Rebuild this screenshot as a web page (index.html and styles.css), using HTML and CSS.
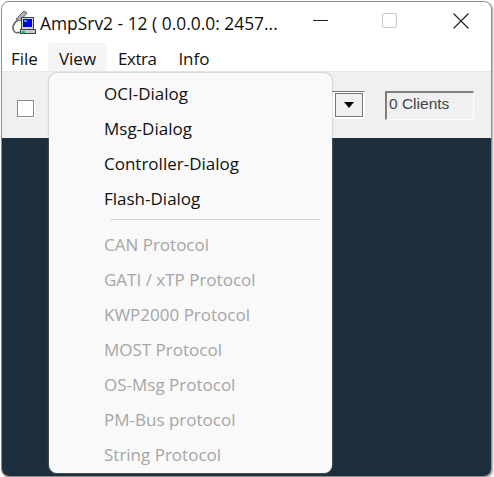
FILE: index.html
```html
<!DOCTYPE html>
<html>
<head>
  <title>AmpSrv2</title>
  <link rel="stylesheet" href="styles.css">
</head>
<body>

  <div class="window">
    <div class="titlebar">
      <svg class="app-icon" width="24" height="25" viewBox="0 0 24 25">
        <path d="M6 10 C1 13 0 18 2 21 C3 23 6 23 9 22" fill="none" stroke="#666" stroke-width="1.6"/>
        <path d="M4 9 L12 1 L15 3 L8 11 Z" fill="#b0b0b0" stroke="#666"/>
        <rect x="9.5" y="7.5" width="12" height="12" fill="#d0d0d0" stroke="#444"/>
        <rect x="11" y="9" width="9" height="8" fill="#0000e0"/>
        <rect x="12" y="10" width="3" height="2" fill="#30a0ff"/>
        <rect x="8.5" y="19.5" width="15" height="4" fill="#c8c8c8" stroke="#444"/>
        <rect x="10" y="21" width="3" height="2" fill="#00d050"/>
      </svg>
      <div class="title">AmpSrv2 - 12 ( 0.0.0.0: 2457...</div>
      <div class="win-btn"><span class="min-icon"></span></div>
      <div class="win-btn"><span class="max-icon"></span></div>
      <div class="win-btn">
        <svg width="16" height="16" viewBox="0 0 16 16"><path d="M0.5 0.5 L15.5 15.5 M15.5 0.5 L0.5 15.5" stroke="#222" stroke-width="1.2"/></svg>
      </div>
    </div>

    <div class="menubar">
      <div class="menubar-item">File</div>
      <div class="menubar-item active">View</div>
      <div class="menubar-item narrow">Extra</div>
      <div class="menubar-item">Info</div>
    </div>

    <div class="toolbar">
      <span class="checkbox"></span>
      <div class="combo"><span class="combo-btn"><span class="arrow"></span></span></div>
      <div class="status">0 Clients</div>
    </div>

    <div class="content"></div>

    <!-- View menu -->
    <div class="menu">
      <div class="menu-item">OCI-Dialog</div>
      <div class="menu-item">Msg-Dialog</div>
      <div class="menu-item">Controller-Dialog</div>
      <div class="menu-item">Flash-Dialog</div>
      <div class="separator"></div>
      <div class="menu-item disabled">CAN Protocol</div>
      <div class="menu-item disabled">GATI / xTP Protocol</div>
      <div class="menu-item disabled">KWP2000 Protocol</div>
      <div class="menu-item disabled">MOST Protocol</div>
      <div class="menu-item disabled">OS-Msg Protocol</div>
      <div class="menu-item disabled">PM-Bus protocol</div>
      <div class="menu-item disabled">String Protocol</div>
    </div>
  </div>

</body>
</html>
```
FILE: styles.css
```css
html, body {
  margin: 0;
  padding: 0;
  background-color: #fff;
}

body {
  width: 494px;
  height: 477px;
  padding: 1px 2px 2px 1px;
  box-sizing: border-box;
  font-family: 'Open Sans', sans-serif;
  color: #111;
  overflow: hidden;
}

.window {
  position: relative;
  height: 100%;
  display: flex;
  flex-direction: column;
  border: 1px solid #8f8f8f;
  border-radius: 8px;
  box-shadow: 1px 1px 2px #aaa;
  overflow: hidden;
  background-color: #fff;
}

.titlebar {
  height: 41px;
  display: flex;
  align-items: center;
  gap: 23px;
  padding-left: 10px;
  padding-right: 7px;
  flex-shrink: 0;
}

.app-icon {
  flex-shrink: 0;
  margin-right: -19px;
}

.title {
  flex: 1;
  min-width: 0;
  font-size: 17.4px;
  white-space: nowrap;
}

.win-btn {
  width: 47px;
  height: 20px;
  margin-bottom: 4px;
  display: flex;
  flex-shrink: 0;
  align-items: center;
  justify-content: center;
}

.min-icon {
  width: 15px;
  height: 1px;
  background-color: #222;
}

.max-icon {
  width: 13px;
  height: 13px;
  margin-right: 2px;
  border: 1px solid #c8c8c8;
  border-radius: 2px;
}

.menubar {
  height: 28px;
  display: flex;
  flex-shrink: 0;
  font-size: 17px;
}

.menubar-item {
  padding: 0 11px;
  line-height: 32px;
}

.menubar-item:first-child {
  padding-left: 9px;
  padding-right: 10px;
}

.menubar-item.narrow {
  letter-spacing: -0.5px;
}

.menubar-item.active {
  background-color: #f5f5f5;
  border-radius: 4px 4px 0 0;
}

.toolbar {
  height: 67px;
  display: flex;
  align-items: center;
  background-color: #f0f0f0;
  border-top: 1px solid #e8e8e8;
  box-sizing: border-box;
  padding-left: 15px;
  flex-shrink: 0;
}

.checkbox {
  width: 15px;
  height: 15px;
  margin-top: 6px;
  background-color: #fff;
  border: 1px solid #8a8a8a;
  box-shadow: 1px 1px 0 #fff;
}

.combo {
  margin-left: 280px;
  width: 51px;
  height: 28px;
  padding: 1px;
  display: flex;
  justify-content: flex-end;
  box-sizing: border-box;
  border: 1px solid #777;
  border-right-color: #fff;
  border-bottom-color: #fff;
  background-color: #fff;
}

.combo-btn {
  width: 26px;
  background-color: #f0f0f0;
  border: 1px solid #777;
  display: flex;
  align-items: center;
  justify-content: center;
}

.arrow {
  border-left: 5px solid transparent;
  border-right: 5px solid transparent;
  border-top: 6px solid #000;
}

.status {
  margin-left: 20px;
  width: 84px;
  height: 26px;
  padding-left: 2px;
  font-family: 'Liberation Sans', sans-serif;
  font-size: 15.5px;
  line-height: 22px;
  color: #444;
  border: 1px solid #fff;
  border-top: 2px solid #808080;
  border-left: 2px solid #808080;
}

.content {
  flex: 1;
  background-color: #1c2e3b;
}

.menu {
  position: absolute;
  left: 47px;
  top: 71px;
  width: 283px;
  height: 400px;
  box-sizing: border-box;
  padding-top: 3px;
  background-color: #f9f9f9;
  border-radius: 8px;
  box-shadow: 0 0 2px #999;
  font-size: 17px;
}

.menu-item {
  height: 35px;
  line-height: 35px;
  padding-left: 55px;
  white-space: nowrap;
}

.menu-item.disabled {
  color: #a6a6a6;
}

.separator {
  height: 1px;
  margin: 3px 12px 7px 61px;
  background-color: #d6d6d6;
}
```
